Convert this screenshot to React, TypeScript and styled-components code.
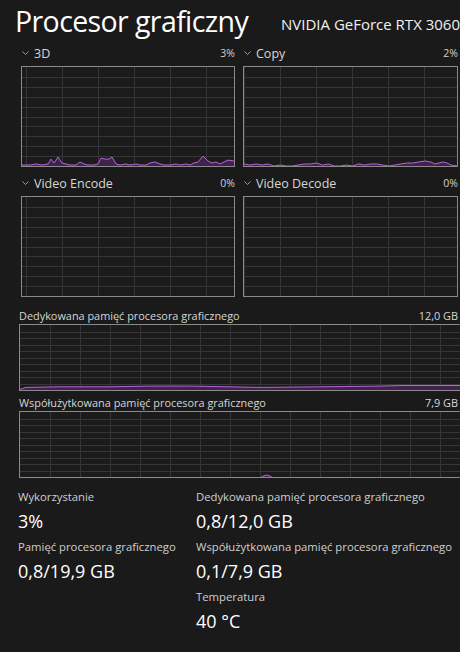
import React from "react"
import styled, { createGlobalStyle } from "styled-components"

const GlobalStyle = createGlobalStyle`
  html, body {
    margin: 0;
    padding: 0;
    background: #1a1a1a;
    overflow: hidden;
  }
  body {
    font-family: "Open Sans", "Noto Sans", sans-serif;
    color: #ffffff;
  }
`

const LINE = "#b566d6"
const FILL = "#43214f"
const GRID = "#363636"

type Point = [number, number]

const Page = styled.div`
  width: 468px;
  height: 652px;
  overflow: hidden;
`

const TitleRow = styled.header`
  display: grid;
  grid-template-columns: 266px auto;
  align-items: start;
  padding-left: 15px;
  height: 45px;
`

const Title = styled.h1`
  margin: 0;
  font-size: 28.5px;
  line-height: 42px;
  letter-spacing: -0.6px;
  font-weight: 400;
  white-space: nowrap;
`

const Model = styled.div`
  padding-top: 14px;
  font-size: 15px;
  line-height: 20px;
  color: #f0f0f0;
  white-space: nowrap;
`

const EngineGrid = styled.section`
  display: grid;
  grid-template-columns: 214px 215px;
  column-gap: 8px;
  row-gap: 8px;
  padding-left: 21px;
`

const EngineCell = styled.div`
  display: flex;
  flex-direction: column;
`

const EngineHeader = styled.div`
  display: flex;
  align-items: center;
  height: 16px;
  margin-bottom: 5px;
`

const Chevron = styled.svg`
  width: 7px;
  height: 4px;
  margin: 0 5px 0 1px;
  flex: none;
`

const EngineName = styled.span`
  font-size: 12.5px;
  color: #d6d6d6;
  white-space: nowrap;
`

const EngineValue = styled.span`
  margin-left: auto;
  font-size: 10.5px;
  color: #d0d0d0;
  white-space: nowrap;
`

const ChartBox = styled.div<{ $h: number }>`
  height: ${(p) => p.$h}px;
  border: 1px solid #8a8a8a;
  box-sizing: border-box;
  background: #1b1b1b;
  overflow: hidden;
  svg {
    display: block;
  }
`

const MemorySection = styled.section`
  padding: 10px 0 0 19px;
  width: 449px;
`

const MemoryHeader = styled.div`
  display: flex;
  align-items: center;
  height: 16px;
  margin-bottom: 1px;
  font-size: 10.9px;
  color: #d6d6d6;
  white-space: nowrap;
  span:last-child {
    margin-left: auto;
    padding-right: 10px;
  }
`

const MemoryBlock = styled.div<{ $gap: number }>`
  margin-top: ${(p) => p.$gap}px;
`

const Stats = styled.section`
  display: grid;
  grid-template-columns: 178px auto;
  padding: 10px 0 0 18px;
`

const StatColumn = styled.div`
  display: flex;
  flex-direction: column;
  gap: 3px;
`

const Stat = styled.div`
  display: flex;
  flex-direction: column;
`

const StatLabel = styled.div`
  font-size: 11.3px;
  line-height: 18px;
  color: #cfcfcf;
  white-space: nowrap;
`

const StatValue = styled.div`
  margin-top: 1px;
  font-size: 18px;
  line-height: 28px;
  color: #ffffff;
  white-space: nowrap;
`

type ChartProps = {
  width: number
  height: number
  points: Point[]
  colStep: number
  colOffset: number
}

const Chart = ({ width, height, points, colStep, colOffset }: ChartProps) => {
  const w = width - 2
  const h = height - 2
  const rows = Array.from({ length: 9 }, (_, i) => Math.round(((i + 1) * h) / 10) + 0.5)
  const cols: number[] = []
  for (let x = colOffset; x < w; x += colStep) cols.push(Math.round(x) + 0.5)
  const maxX = points[points.length - 1][0]
  const coords = points.map(([x, v]) => [(x / maxX) * w, h - (v / 100) * h] as Point)
  const line = coords.map(([x, y]) => `${x.toFixed(1)},${y.toFixed(1)}`).join(" ")
  const area = `0,${h} ${line} ${w},${h}`
  return (
    <svg width={w} height={h} viewBox={`0 0 ${w} ${h}`}>
      {rows.map((y) => (
        <line key={`r${y}`} x1={0} x2={w} y1={y} y2={y} stroke={GRID} strokeWidth={1} />
      ))}
      {cols.map((x) => (
        <line key={`c${x}`} x1={x} x2={x} y1={0} y2={h} stroke={GRID} strokeWidth={1} />
      ))}
      <polygon points={area} fill={FILL} />
      <polyline points={line} fill="none" stroke={LINE} strokeWidth={1} />
    </svg>
  )
}

const threeD: Point[] = [
  [0, 1], [8, 1], [14, 2], [20, 1], [26, 2], [29, 7], [32, 3], [36, 9], [40, 3], [44, 2],
  [48, 1], [54, 1], [58, 4], [62, 2], [66, 1], [72, 1], [76, 2], [79, 8], [83, 7], [87, 7],
  [90, 9], [94, 2], [98, 1], [104, 2], [108, 1], [114, 2], [118, 1], [124, 1], [128, 3],
  [133, 4], [138, 2], [142, 1], [148, 1], [154, 2], [158, 1], [164, 2], [168, 1], [172, 3],
  [176, 4], [181, 10], [186, 5], [190, 3], [194, 4], [198, 2], [202, 4], [206, 6], [212, 5],
]

const copy: Point[] = [
  [0, 2], [6, 1], [12, 2], [18, 1], [24, 2], [30, 0], [36, 1], [42, 0], [48, 0], [54, 1],
  [60, 2], [66, 2], [72, 3], [78, 1], [84, 2], [90, 0], [96, 0], [102, 1], [108, 0], [114, 2],
  [120, 1], [126, 2], [132, 2], [138, 1], [144, 0], [150, 1], [156, 2], [162, 3], [168, 3],
  [174, 4], [180, 5], [186, 4], [190, 2], [194, 3], [198, 4], [202, 3], [206, 1], [212, 0],
]

const idle: Point[] = [
  [0, -3],
  [212, -3],
]

const dedicated: Point[] = [
  [0, 1], [6, 4], [40, 5], [90, 5], [130, 6], [170, 6], [240, 4], [300, 5], [360, 6],
  [380, 7], [420, 7], [446, 7],
]

const shared: Point[] = [
  [0, -3], [238, -3], [242, 1], [246, 3], [250, 1], [254, -3], [446, -3],
]

const ChevronIcon = () => (
  <Chevron viewBox="0 0 7 4">
    <polyline points="0.5,0.5 3.5,3.5 6.5,0.5" fill="none" stroke="#a8a8a8" strokeWidth={0.9} />
  </Chevron>
)

const engines = [
  { name: "3D", value: "3%", points: threeD, offset: 4, width: 214 },
  { name: "Copy", value: "2%", points: copy, offset: 0, width: 215 },
  { name: "Video Encode", value: "0%", points: idle, offset: 4, width: 214 },
  { name: "Video Decode", value: "0%", points: idle, offset: 0, width: 215 },
]

export default function App() {
  return (
    <>
      <GlobalStyle />
      <Page>
        <TitleRow>
          <Title>Procesor graficzny</Title>
          <Model>NVIDIA GeForce RTX 3060</Model>
        </TitleRow>

        <EngineGrid>
          {engines.map((e) => (
            <EngineCell key={e.name}>
              <EngineHeader>
                <ChevronIcon />
                <EngineName>{e.name}</EngineName>
                <EngineValue>{e.value}</EngineValue>
              </EngineHeader>
              <ChartBox $h={101}>
                <Chart width={e.width} height={101} points={e.points} colStep={36} colOffset={e.offset} />
              </ChartBox>
            </EngineCell>
          ))}
        </EngineGrid>

        <MemorySection>
          <MemoryBlock $gap={0}>
            <MemoryHeader>
              <span>Dedykowana pamięć procesora graficznego</span>
              <span>12,0 GB</span>
            </MemoryHeader>
            <ChartBox $h={67}>
              <Chart width={449} height={67} points={dedicated} colStep={30} colOffset={30} />
            </ChartBox>
          </MemoryBlock>
          <MemoryBlock $gap={3}>
            <MemoryHeader>
              <span>Współużytkowana pamięć procesora graficznego</span>
              <span>7,9 GB</span>
            </MemoryHeader>
            <ChartBox $h={67}>
              <Chart width={449} height={67} points={shared} colStep={30} colOffset={30} />
            </ChartBox>
          </MemoryBlock>
        </MemorySection>

        <Stats>
          <StatColumn>
            <Stat>
              <StatLabel>Wykorzystanie</StatLabel>
              <StatValue>3%</StatValue>
            </Stat>
            <Stat>
              <StatLabel>Pamięć procesora graficznego</StatLabel>
              <StatValue>0,8/19,9 GB</StatValue>
            </Stat>
          </StatColumn>
          <StatColumn>
            <Stat>
              <StatLabel>Dedykowana pamięć procesora graficznego</StatLabel>
              <StatValue>0,8/12,0 GB</StatValue>
            </Stat>
            <Stat>
              <StatLabel>Współużytkowana pamięć procesora graficznego</StatLabel>
              <StatValue>0,1/7,9 GB</StatValue>
            </Stat>
            <Stat>
              <StatLabel>Temperatura</StatLabel>
              <StatValue>40 °C</StatValue>
            </Stat>
          </StatColumn>
        </Stats>
      </Page>
    </>
  )
}
